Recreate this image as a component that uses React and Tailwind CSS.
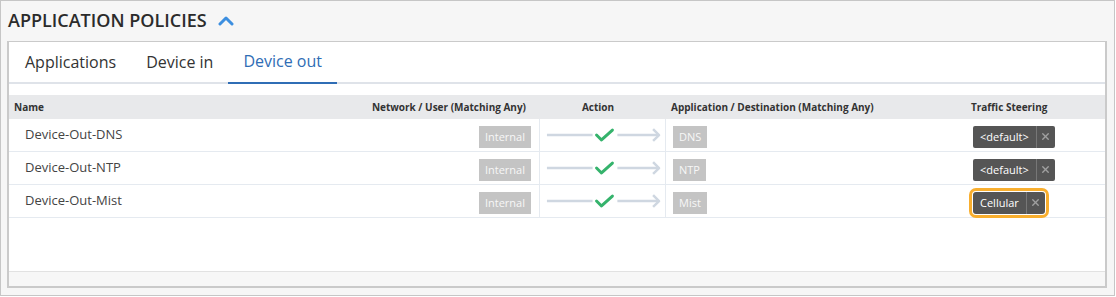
import { X } from 'lucide-react'

const rows = [
  { name: 'Device-Out-DNS', net: 'Internal', app: 'DNS', steer: '<default>' },
  { name: 'Device-Out-NTP', net: 'Internal', app: 'NTP', steer: '<default>' },
  { name: 'Device-Out-Mist', net: 'Internal', app: 'Mist', steer: 'Cellular', focus: true },
]

function ActionArrow() {
  return (
    <svg width="126" height="20" viewBox="0 0 126 20">
      <line x1="7" y1="9" x2="53" y2="9" stroke="#cfd7e1" strokeWidth="2.5" />
      <polyline points="57,9 62,14 73,4" fill="none" stroke="#35b36c" strokeWidth="3" strokeLinecap="round" strokeLinejoin="round" />
      <line x1="78" y1="9" x2="119" y2="9" stroke="#cfd7e1" strokeWidth="2.5" />
      <polyline points="114,3 120,9 114,15" fill="none" stroke="#cfd7e1" strokeWidth="2.5" strokeLinejoin="round" />
    </svg>
  )
}

function Chip({ children }) {
  return (
    <span className="inline-flex items-center h-[22px] px-[6px] bg-[#c4c4c4] text-[#f7f7f7] text-[11px] leading-none">
      {children}
    </span>
  )
}

function Steering({ label, focus }) {
  return (
    <span
      className={`inline-flex items-stretch h-[22px] bg-[#555555] text-white text-[11px] leading-none rounded-[2px] ${
        focus ? 'outline-[3px] outline-solid outline-[#f8ae2e] outline-offset-[1px] rounded-[3px]' : ''
      }`}
    >
      <span className="flex items-center px-[7px]">{label}</span>
      <span className="flex items-center justify-center w-[19px] border-l border-[#777]">
        <X size={11} strokeWidth={3} className="text-[#a0a0a0]" />
      </span>
    </span>
  )
}

export default function App() {
  return (
    <div
      className="w-[1115px] h-[296px] bg-[#f6f6f6] border border-[#c6c6c6] pl-[6px] pr-[7px] flex flex-col"
      style={{ fontFamily: '"Open Sans", "Noto Sans", sans-serif' }}
    >
      {/* Titel */}
      <div className="h-[40px] flex items-center gap-[11px] pl-[1px] pb-[1px]">
        <h2 className="text-[18px] font-semibold text-[#2b2b2b]">APPLICATION POLICIES</h2>
        <svg width="16" height="10" viewBox="0 0 16 10">
          <polyline points="2,8 8,2 14,8" fill="none" stroke="#3d8fe0" strokeWidth="3" strokeLinecap="round" strokeLinejoin="round" />
        </svg>
      </div>

      {/* Card */}
      <div className="w-[1100px] h-[247px] bg-white border-t border-x-2 border-b-2 border-[#cacaca] flex flex-col">
        <div className="h-[42px] flex pl-[1px] border-b-2 border-[#dfe3e9] text-[16px] text-[#333]">
          {[['Applications', false], ['Device in', false], ['Device out', true]].map(([label, active]) => (
            <div
              key={label}
              className={`px-[15px] flex items-center pb-[2px] -mb-[2px] ${
                active ? 'border-b-2 border-[#2f6db5] text-[#2f6db5]' : ''
              }`}
            >
              {label}
            </div>
          ))}
        </div>

        <div className="h-[11px]" />

        {/* Kopf */}
        <div className="h-[24px] flex items-center bg-[#e8e9eb] text-[10px] font-bold text-[#333]">
          <div className="w-[331px] pl-[5px]">Name</div>
          <div className="w-[200px] text-right pr-[14px]">Network / User (Matching Any)</div>
          <div className="w-[126px] text-center pr-[10px]">Action</div>
          <div className="w-[300px] pl-[5px]">Application / Destination (Matching Any)</div>
          <div className="pl-[5px]">Traffic Steering</div>
        </div>

        {rows.map((r) => (
          <div key={r.name} className="h-[33px] flex items-stretch border-b border-[#e5eaf0]">
            <div className="w-[331px] pl-[16px] flex items-center text-[13px] text-[#444]">{r.name}</div>
            <div className="w-[200px] flex items-center justify-end pr-[8px] pt-[3px] border-r border-[#e5eaf0]">
              <Chip>{r.net}</Chip>
            </div>
            <div className="w-[126px] flex items-center pt-[2px] border-r border-[#e5eaf0]">
              <ActionArrow />
            </div>
            <div className="w-[300px] flex items-center pl-[7px] pt-[3px]">
              <Chip>{r.app}</Chip>
            </div>
            <div className="flex items-center pl-[7px] pt-[3px]">
              <Steering label={r.steer} focus={r.focus} />
            </div>
          </div>
        ))}

        <div className="flex-1" />
        <div className="h-[15px] bg-[#f7f7f7] border-t border-[#e2e2e2]" />
      </div>
    </div>
  )
}
